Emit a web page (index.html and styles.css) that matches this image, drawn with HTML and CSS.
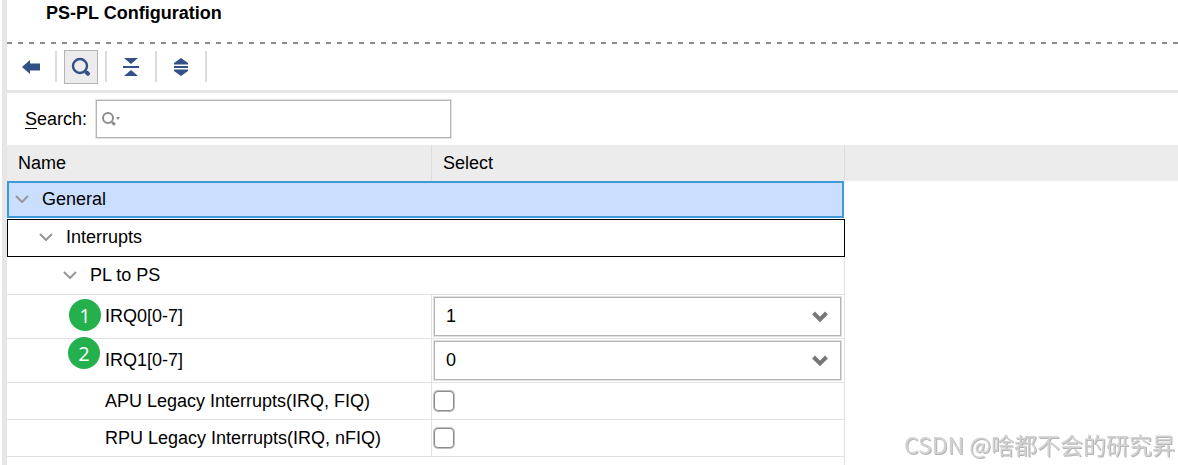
FILE: index.html
```html
<!DOCTYPE html>
<html lang="en">
  <head>
    <meta charset="UTF-8" />
    <meta name="viewport" content="width=device-width, initial-scale=1.0" />
    <title>PS-PL Configuration</title>
    <link rel="stylesheet" href="styles.css">
  </head>
  <body>
    <main class="panel">
      <h1 class="title">PS-PL Configuration</h1>

      <div class="toolbar">
        <button type="button" class="tool-btn" aria-label="Back">
          <svg width="18" height="14" viewBox="0 0 18 14"><path d="M0 7 8 0v3.500h10v7H8V14z" /></svg>
        </button>
        <button type="button" class="tool-btn active" aria-label="Search">
          <svg width="20" height="20" viewBox="0 0 20 20">
            <circle cx="9" cy="9" r="7" fill="none" stroke="#335087" stroke-width="2.400" />
            <path d="m15.500 15.500 1.500 1.300" fill="none" stroke="#335087" stroke-width="4" stroke-linecap="round" />
          </svg>
        </button>
        <button type="button" class="tool-btn" aria-label="Collapse all">
          <svg width="16" height="18" viewBox="0 0 16 18"><path d="M1 0h14L8 6zM0 8h16v2H0zM8 12l7 6H1z" /></svg>
        </button>
        <button type="button" class="tool-btn" aria-label="Expand all">
          <svg width="16" height="18" viewBox="0 0 16 18"><path d="M8 0l7 5v1.500H1V5zM1 8h14v2H1zM1 11.500h14V13l-7 5-7-5z" /></svg>
        </button>
      </div>

      <div class="search-row">
        <label for="search"><u>S</u>earch:</label>
        <div class="search-box">
          <input type="text" id="search" />
          <svg class="search-icon" width="20" height="16" viewBox="0 0 20 16">
            <circle cx="6" cy="6" r="5" fill="none" stroke="#8c8c8c" stroke-width="2" />
            <path d="m11 11 1 1" fill="none" stroke="#8c8c8c" stroke-width="3" stroke-linecap="round" />
            <path d="M14 5h4l-2 3z" fill="#8c8c8c" />
          </svg>
        </div>
      </div>

      <table class="config">
        <colgroup>
          <col class="col-name" />
          <col class="col-select" />
          <col />
        </colgroup>
        <thead>
          <tr>
            <th>Name</th>
            <th>Select</th>
            <th></th>
          </tr>
        </thead>
        <tbody>
          <tr class="group">
            <td colspan="2">
              <div class="node selected">
                <svg class="arrow" width="14" height="8" viewBox="0 0 14 8"><path d="m1 1 6 6 6-6" /></svg>General
              </div>
            </td>
            <td></td>
          </tr>
          <tr class="group">
            <td colspan="2">
              <div class="node focused">
                <svg class="arrow" width="14" height="8" viewBox="0 0 14 8"><path d="m1 1 6 6 6-6" /></svg>Interrupts
              </div>
            </td>
            <td></td>
          </tr>
          <tr class="group">
            <td colspan="2">
              <div class="node nested">
                <svg class="arrow" width="14" height="8" viewBox="0 0 14 8"><path d="m1 1 6 6 6-6" /></svg>PL to PS
              </div>
            </td>
            <td></td>
          </tr>
          <tr class="tall">
            <td class="leaf"><span class="badge first">1</span><label for="irq0">IRQ0[0-7]</label></td>
            <td class="value">
              <div class="select-box">
                <select id="irq0"><option>0</option><option selected>1</option></select>
                <svg class="caret" width="16" height="12" viewBox="0 0 16 12"><path d="m1.500 2 6.500 6.500L14.500 2" /></svg>
              </div>
            </td>
            <td></td>
          </tr>
          <tr class="tall">
            <td class="leaf"><span class="badge second">2</span><label for="irq1">IRQ1[0-7]</label></td>
            <td class="value">
              <div class="select-box">
                <select id="irq1"><option selected>0</option><option>1</option></select>
                <svg class="caret" width="16" height="12" viewBox="0 0 16 12"><path d="m1.500 2 6.500 6.500L14.500 2" /></svg>
              </div>
            </td>
            <td></td>
          </tr>
          <tr>
            <td class="leaf"><label for="apu">APU Legacy Interrupts(IRQ, FIQ)</label></td>
            <td class="value"><input type="checkbox" id="apu" /></td>
            <td></td>
          </tr>
          <tr>
            <td class="leaf"><label for="rpu">RPU Legacy Interrupts(IRQ, nFIQ)</label></td>
            <td class="value"><input type="checkbox" id="rpu" /></td>
            <td></td>
          </tr>
          <tr class="filler">
            <td colspan="2"></td>
            <td></td>
          </tr>
        </tbody>
      </table>
    </main>
    <div class="watermark">CSDN @啥都不会的研究昇</div>
  </body>
</html>
```
FILE: styles.css
```css
* {
  margin: 0;
  padding: 0;
  box-sizing: border-box;
}

body {
  font-family: "Liberation Sans", Arial, sans-serif;
  font-size: 18px;
  line-height: 20px;
  color: #000;
  background: #fff;
  height: 100vh;
  padding-left: 2px;
  overflow: hidden;
}

.panel {
  display: flex;
  flex-direction: column;
  min-height: 100%;
  border-left: 5px solid #e6e6e6;
}

.title {
  height: 44px;
  padding: 3px 39px;
  font-size: 18px;
  line-height: 20px;
  background: repeating-linear-gradient(to right, #8c8c8c 0 5px, transparent 5px 11px) left bottom / 100% 2px no-repeat;
}

/* toolbar */
.toolbar {
  display: flex;
  align-items: center;
  gap: 16px;
  height: 49px;
  padding-left: 7px;
  border-bottom: 3px solid #e6e6e6;
}

.tool-btn {
  position: relative;
  display: flex;
  justify-content: center;
  align-items: center;
  width: 34px;
  height: 34px;
  border: 1px solid transparent;
  background: none;
  fill: #335087;
}

.tool-btn.active {
  border-color: #b4b4b4;
  background: #ececec;
}

/* separator after each button */
.tool-btn::after {
  content: "";
  position: absolute;
  top: 0;
  right: -10px;
  width: 2px;
  height: 31px;
  background: #dcdcdc;
}

/* search */
.search-row {
  display: flex;
  align-items: center;
  gap: 9px;
  height: 52px;
  padding-left: 18px;
}

.search-row u {
  text-underline-offset: 3px;
}

.search-box {
  position: relative;
  width: 30.8%;
}

#search {
  display: block;
  width: 100%;
  height: 38px;
  padding: 0 12px 0 28px;
  border: 1px solid #b4b4b4;
  box-shadow: 0 0 0 1px #e1e1e1;
  font: inherit;
  outline: none;
}

.search-icon {
  position: absolute;
  left: 6px;
  top: 12px;
}

/* table */
.config {
  width: 100%;
  table-layout: fixed;
  border-collapse: separate;
  border-spacing: 0;
}

.col-name {
  width: 36.3%;
}

.col-select {
  width: 35.3%;
}

.config th {
  height: 36px;
  padding: 0 11px;
  text-align: left;
  font-weight: normal;
  background: #ececec;
  border-right: 1px solid #dcdcdc;
}

.config td {
  height: 37px;
  border-right: 1px solid #e1e1e1;
  border-bottom: 1px solid #e1e1e1;
}

.config th:last-child,
.config td:last-child {
  border: none;
}

.config .tall td {
  height: 44px;
}

.config .group td {
  height: 38px;
  border: none;
}

.config .filler td {
  height: 8px;
  border-bottom: none;
}

.node {
  display: flex;
  align-items: center;
  gap: 13px;
  height: 38px;
  padding: 0 0 2px 56px;
}

.node.selected {
  height: 37px;
  margin: 0 1px 1px 0;
  padding-left: 6px;
  border: 2px solid #4098d7;
  background: #cadeff;
}

.node.focused {
  padding-left: 31px;
  border: 1px solid #000;
}

.node.nested {
  border-right: 1px solid #e1e1e1;
  border-bottom: 1px solid #e1e1e1;
}

.arrow {
  fill: none;
  stroke: #969696;
  stroke-width: 2;
}

.config .leaf {
  position: relative;
  padding-left: 98px;
}

.config .tall .leaf {
  padding-bottom: 2px;
}

.badge {
  position: absolute;
  left: 62px;
  top: 4px;
  z-index: 1;
  width: 32px;
  height: 32px;
  border-radius: 50%;
  background: #24b14d;
  color: #fff;
  font-family: "Open Sans", sans-serif;
  font-size: 20px;
  line-height: 34px;
  text-align: center;
}

.badge.second {
  left: 61px;
  top: -2px;
}

.config .value {
  padding: 0 3px 0 2px;
}

.select-box {
  position: relative;
}

.select-box select {
  display: block;
  appearance: none;
  width: 100%;
  height: 39px;
  padding: 0 11px 1px;
  border: 1px solid #b4b4b4;
  border-radius: 0;
  box-shadow: 0 0 0 1px #e1e1e1;
  background: #fff;
  color: #000;
  font: inherit;
}

.caret {
  position: absolute;
  right: 13px;
  top: 14px;
  fill: none;
  stroke: #787878;
  stroke-width: 4;
  pointer-events: none;
}

input[type="checkbox"] {
  display: block;
  appearance: none;
  width: 20px;
  height: 20px;
  border: 1px solid #8c8c8c;
  border-radius: 4px;
  box-shadow: 0 0 0 1px #bebebe;
  background: #fff;
}

input[type="checkbox"]:checked {
  background: #335087;
}

.watermark {
  position: fixed;
  right: 3px;
  bottom: 5px;
  font-family: "Noto Sans CJK SC", sans-serif;
  font-size: 23px;
  line-height: 32px;
  color: #d2d2d2;
  text-shadow: 1px 1px 0 #b4b4b4;
}
```
